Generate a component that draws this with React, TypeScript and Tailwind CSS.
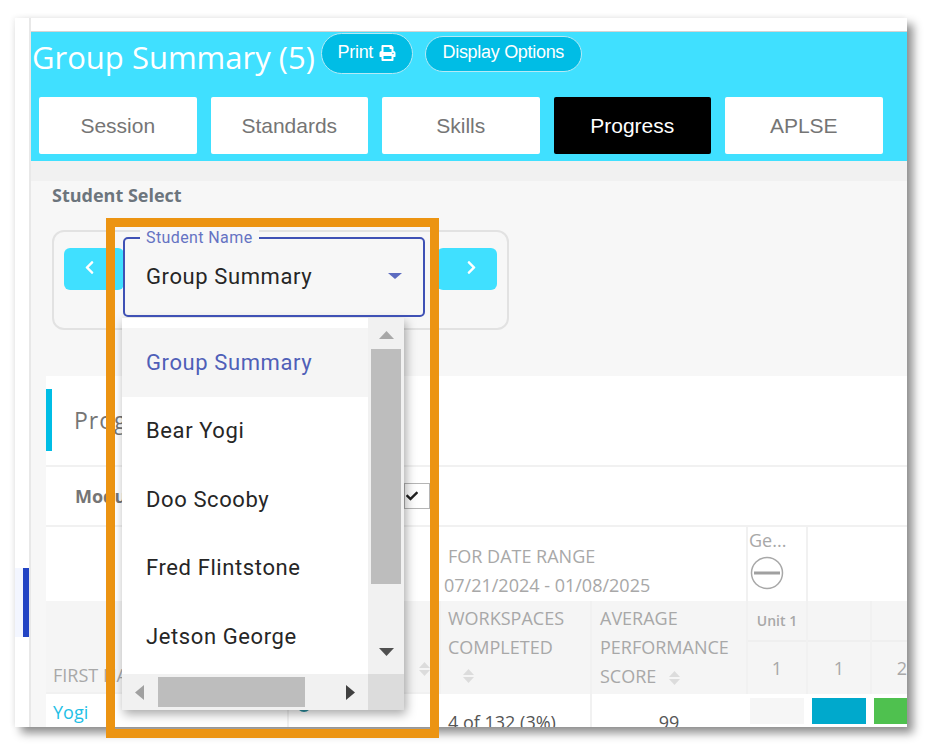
import { FaPrint, FaChevronLeft, FaChevronRight, FaCheck } from "react-icons/fa";

const tabs = ["Session", "Standards", "Skills", "Progress", "APLSE"];
const students = ["Group Summary", "Bear Yogi", "Doo Scooby", "Fred Flintstone", "Jetson George"];

function Tri({ dir, color, w, h }: { dir: "up" | "down" | "left" | "right"; color: string; w: number; h: number }) {
  const pts = { up: "0,10 5,0 10,10", down: "0,0 10,0 5,10", left: "10,0 10,10 0,5", right: "0,0 10,5 0,10" }[dir];
  return (
    <svg width={w} height={h} viewBox="0 0 10 10" preserveAspectRatio="none" className="shrink-0">
      <polygon points={pts} fill={color} />
    </svg>
  );
}

function Sort() {
  return (
    <span className="inline-flex flex-col gap-[2px] align-middle">
      <Tri dir="up" color="#dcdcdc" w={11} h={6} />
      <Tri dir="down" color="#dcdcdc" w={11} h={6} />
    </span>
  );
}

function StudentDropdown() {
  return (
    <div className="absolute left-[91px] top-[200px] w-[333px] h-[520px] border-[9px] border-[#ec9412] flex flex-col font-['Roboto',sans-serif]">
      <div className="relative ml-[8px] mt-[10px] w-[302px] h-[80px] border-2 border-[#3f51b5] rounded-[5px] flex items-center justify-between pl-[21px] pr-[21px] pb-[2px]">
        <span className="absolute -top-[10px] left-[15px] px-[6px] bg-[#f7f7f7] text-[16px] leading-[18px] tracking-[0.4px] text-[#6573c3]">
          Student Name
        </span>
        <span className="text-[22px] tracking-[0.6px] text-[#262626]">Group Summary</span>
        <Tri dir="down" color="#5c6bc0" w={14} h={6} />
      </div>
      <div className="ml-[7px] mt-px w-[282px] h-[392px] bg-white shadow-[2px_4px_10px_rgba(0,0,0,0.35)] flex flex-col overflow-hidden">
        <div className="flex-1 flex min-h-0">
          <div className="w-[246px] pt-[10px] overflow-hidden">
            {students.map((s, i) => (
              <div
                key={s}
                className={`h-[68.5px] pl-[24px] flex items-center text-[22px] tracking-[0.6px] whitespace-nowrap ${
                  i === 0 ? "bg-[#f5f5f5] text-[#4f5fb8]" : "text-[#262626]"
                }`}
              >
                {s}
              </div>
            ))}
          </div>
          <div className="w-[36px] bg-[#f1f1f1] flex flex-col items-center pt-[13px]">
            <Tri dir="up" color="#a8a8a8" w={15} h={8} />
            <div className="w-[30px] h-[235px] bg-[#bdbdbd] mt-[10px]" />
            <div className="mt-[64px]">
              <Tri dir="down" color="#505050" w={15} h={8} />
            </div>
          </div>
        </div>
        <div className="h-[36px] flex bg-[#f1f1f1]">
          <div className="w-[246px] flex items-center pl-[13px]">
            <Tri dir="left" color="#a0a0a0" w={9} h={15} />
            <div className="ml-[14px] w-[147px] h-[30px] bg-[#bdbdbd]" />
            <div className="ml-[41px]">
              <Tri dir="right" color="#404040" w={9} h={15} />
            </div>
          </div>
          <div className="w-[36px] bg-[#dcdcdc]" />
        </div>
      </div>
    </div>
  );
}

export default function App() {
  return (
    <div className="w-[927px] h-[745px] bg-white pt-[18px] pl-[15px] overflow-hidden font-['Open_Sans',sans-serif]">
      <div className="relative w-[892px] h-[709px] flex bg-white shadow-[6px_6px_9px_rgba(0,0,0,0.45),-2px_-1px_5px_rgba(0,0,0,0.05)]">
        <div className="w-[16px] shrink-0 border-r-2 border-[#e8e8e8] pt-[550px]">
          <div className="h-[69px] bg-[#f3f6ff] flex justify-end">
            <div className="w-[6px] bg-[#2244c4]" />
          </div>
        </div>

        <div className="flex-1 min-w-0 flex flex-col overflow-hidden">
          <div className="h-[14px] shrink-0 bg-white border-b border-[#d4d4d4]" />
          <div className="h-[129px] shrink-0 bg-[#40e0ff]">
            <div className="h-[65px] flex items-start pl-[1px] pt-[1px]">
              <h1 className="text-[31px] leading-[46px] mt-[1px] text-white whitespace-nowrap">Group Summary (5)</h1>
              <button className="ml-[6px] h-[41px] w-[92px] rounded-full bg-[#00bde5] border border-[#b5e9f5] text-white text-[18px] font-['Liberation_Sans',sans-serif] tracking-[-0.3px] flex items-center justify-center gap-[6px] pb-[3px]">
                Print <FaPrint className="w-[17px] h-[16px] mt-[2px]" />
              </button>
              <button className="ml-[12px] mt-[3px] h-[36px] w-[157px] rounded-full bg-[#00bde5] border border-[#b5e9f5] text-white text-[18px] font-['Liberation_Sans',sans-serif] tracking-[-0.3px] flex items-center justify-center pb-[3px]">
                Display Options
              </button>
            </div>
            <div className="flex gap-[14px] pl-[8px]">
              {tabs.map((t) => (
                <div
                  key={t}
                  className={`w-[157.5px] h-[57px] rounded-[2px] flex items-center justify-center text-[21px] font-['Liberation_Sans',sans-serif] ${
                    t === "Progress" ? "bg-black text-white" : "bg-white text-[#757575]"
                  }`}
                >
                  {t}
                </div>
              ))}
            </div>
          </div>

          <div className="h-[20px] shrink-0 bg-[#f1f1f1]" />

          <div className="flex-1 min-h-0 bg-[#f7f7f7]">
            <div className="pl-[21px] h-[49px] text-[18px] leading-[28px] font-bold text-[#6c757d]">Student Select</div>
            <div className="ml-[21px] w-[457px] h-[100px] rounded-[12px] border-2 border-[#e2e2e2] flex justify-between items-start pt-[16px] px-[10px]">
              <div className="w-[60px] h-[42px] rounded-[6px] bg-[#40e0ff] text-white flex items-center pl-[19px] pb-[4px]">
                <FaChevronLeft className="w-[13px] h-[15px]" />
              </div>
              <div className="w-[60px] h-[42px] rounded-[6px] bg-[#40e0ff] text-white flex items-center justify-end pr-[19px] pb-[4px]">
                <FaChevronRight className="w-[13px] h-[15px]" />
              </div>
            </div>

            <div className="ml-[15px] mt-[46px] bg-white h-[400px]">
              <div className="h-[91px] border-b-2 border-[#f1f1f1] pt-[13px]">
                <div className="h-[62px] border-l-[6px] border-[#00bde5] pl-[22px] flex items-center text-[23px] tracking-[1px] text-[#757575]">
                  Progress
                </div>
              </div>
              <div className="h-[60px] border-b-2 border-[#f1f1f1] pl-[29px] flex items-center">
                <span className="w-[329px] text-[18px] font-bold text-[#757575]">Module</span>
                <span className="w-[26px] h-[26px] border border-[#b5b5b5] flex items-center justify-start pl-[1px] text-[#222]">
                  <FaCheck className="w-[12px] h-[12px]" />
                </span>
              </div>

              <div className="grid grid-cols-[241px_152px_153px_154px_62px_62px_62px] grid-rows-[74px_93px_34px] text-[18px] text-[#a8a8a8] leading-[29px]">
                <div className="col-span-2" />
                <div className="col-span-2 pl-[8px] pt-[15px] whitespace-nowrap">
                  <div className="pl-px">FOR DATE RANGE</div>
                  <div className="-ml-[3px]">07/21/2024 - 01/08/2025</div>
                </div>
                <div className="border-x-2 border-[#f1f1f1] pl-[1px] pt-[0px]">
                  <div className="leading-[27px]">Ge...</div>
                  <svg width="34" height="34" viewBox="0 0 34 34" className="ml-[1px] mt-[2px]">
                    <circle cx="17" cy="17" r="15.5" fill="none" stroke="#a8a8a8" strokeWidth="1.5" />
                    <rect x="4" y="15.5" width="26" height="3" fill="#a0a0a0" />
                  </svg>
                </div>
                <div className="col-span-2" />

                <div className="col-span-2 bg-[#f5f5f5] border-b-2 border-[#f1f1f1] pl-[7px] flex items-end justify-between pr-[9px] pb-[2px]">
                  <span>FIRST NAME</span>
                  <span className="pb-[8px]">
                    <Sort />
                  </span>
                </div>
                <div className="bg-[#f5f5f5] border-x-2 border-[#f1f1f1] pl-[7px] pt-[3px]">
                  WORKSPACES
                  <br />
                  COMPLETED
                  <div className="pl-[15px] leading-[24px]">
                    <Sort />
                  </div>
                </div>
                <div className="bg-[#f5f5f5] pl-[8px] pt-[3px] whitespace-nowrap">
                  AVERAGE
                  <br />
                  PERFORMANCE
                  <br />
                  SCORE <span className="ml-[8px]"><Sort /></span>
                </div>
                <div className="bg-[#f5f5f5] flex flex-col border-x-2 border-[#f1f1f1]">
                  <div className="h-[41px] border-b-2 border-[#efefef] flex items-center justify-center text-[14px] font-semibold">Unit 1</div>
                  <div className="flex-1 flex items-center justify-center">1</div>
                </div>
                <div className="bg-[#f5f5f5] flex flex-col">
                  <div className="h-[41px] border-b-2 border-[#efefef]" />
                  <div className="flex-1 flex items-center justify-center">1</div>
                </div>
                <div className="bg-[#f5f5f5] flex flex-col border-l-2 border-[#f1f1f1]">
                  <div className="h-[41px] border-b-2 border-[#efefef]" />
                  <div className="flex-1 flex items-center justify-center">2</div>
                </div>

                <div className="pl-[7px] pt-[4px] text-[#1ec0e6]">Yogi</div>
                <div className="border-l-2 border-[#f1f1f1] pl-[8px] pt-[4px]">
                  <span className="block w-[14px] h-[14px] rounded-full bg-[#2a8f9f]" />
                </div>
                <div className="pl-[9px] pt-[14px] text-[#555] border-r-2 border-[#f1f1f1] whitespace-nowrap">4 of 132 (3%)</div>
                <div className="text-center pt-[14px] text-[#555]">99</div>
                <div className="p-[4px]"><div className="h-full bg-[#f6f6f6]" /></div>
                <div className="p-[4px]"><div className="h-full bg-[#00a9cc]" /></div>
                <div className="p-[4px]"><div className="h-full bg-[#4fc14f]" /></div>
              </div>
            </div>
          </div>
        </div>

        <StudentDropdown />
      </div>
    </div>
  );
}
